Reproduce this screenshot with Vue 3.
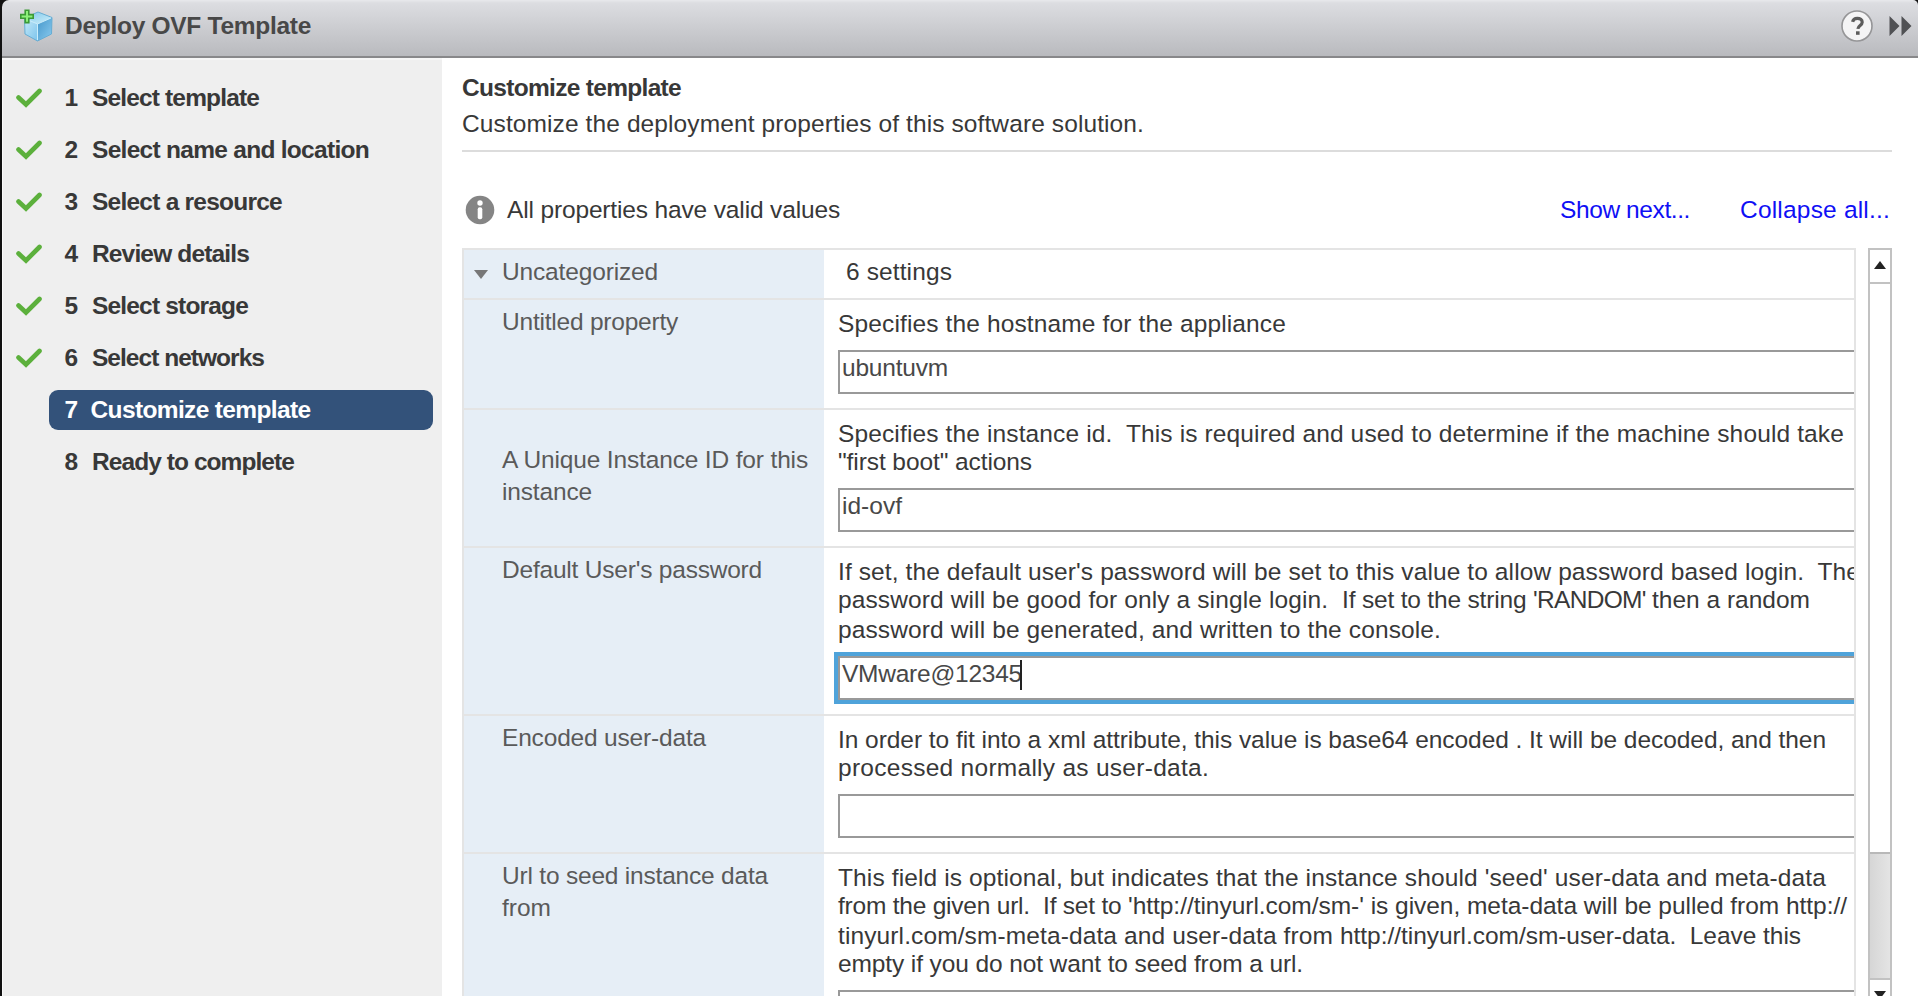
<script setup>
const steps = [
  { label: 'Select template', w: 167, done: true },
  { label: 'Select name and location', w: 277, done: true },
  { label: 'Select a resource', w: 190, done: true },
  { label: 'Review details', w: 157, done: true },
  { label: 'Select storage', w: 156, done: true },
  { label: 'Select networks', w: 172, done: true },
  { label: 'Customize template', w: 220, active: true },
  { label: 'Ready to complete', w: 202 },
]

// Every text line is a list of [text, advance width] segments.
const rows = [
  {
    kind: 'one',
    label: [[['Untitled property', 176]]],
    text: [[['Specifies the hostname for the appliance', 448]]],
    value: 'ubuntuvm', vw: 106,
  },
  {
    kind: 'two centered',
    label: [[['A Unique Instance ID for this', 306]], [['instance', 90]]],
    text: [
      [['Specifies the instance id.  This is required and used to determine if the machine should take', 1006]],
      [['"first boot" actions', 194]],
    ],
    value: 'id-ovf', vw: 60,
  },
  {
    kind: 'three',
    label: [[["Default User's password", 260]]],
    text: [
      [["If set, the default user's password will be set to this value to allow password based login.  The", 1022]],
      [
        ['password will be good for only a single login.  ', 504],
        ['If set to the string ', 191],
        ["'RANDOM' ", 119],
        ['then a random', 158],
      ],
      [['password will be generated, and written to the console.', 603]],
    ],
    value: 'VMware@12345', vw: 180, focused: true,
  },
  {
    kind: 'two',
    label: [[['Encoded user-data', 204]]],
    text: [
      [['In order to fit into a xml attribute, this value is base64 encoded . It will be decoded, and then', 988]],
      [['processed normally as user-data.', 371]],
    ],
    value: '', vw: 0,
  },
  {
    kind: 'four',
    label: [[['Url to seed instance data', 266]], [['from', 49]]],
    text: [
      [["This field is optional, but indicates that the instance should 'seed' user-data and meta-data", 988]],
      [
        ['from the given url.  If set to ', 290],
        ["'http://tinyurl.com/sm-' is given, meta-data will be pulled from http://", 719],
      ],
      [
        ['tinyurl.com/sm-meta-data and user-data from ', 502],
        ['http://tinyurl.com/sm-user-data.  Leave this', 461],
      ],
      [['empty if you do not want to seed from a url.', 465]],
    ],
    value: '', vw: 0,
  },
]

// Tracks a run of text so that it fills the given advance width.
const vFit = {
  mounted(el, { value }) {
    if (!value) return
    const natural = el.getBoundingClientRect().width
    el.style.letterSpacing = `${(value - natural) / el.textContent.length}px`
  },
}
</script>

<template>
  <div class="window">
    <header class="titlebar">
      <svg class="cube" viewBox="0 0 34 34" width="34" height="34">
        <defs>
          <linearGradient id="top" x1="0" y1="0" x2="1" y2="1">
            <stop offset="0" stop-color="#7cc6ea" /><stop offset="1" stop-color="#d0f0fb" />
          </linearGradient>
          <linearGradient id="left" x1="0" y1="0" x2="1" y2="1">
            <stop offset="0" stop-color="#c5e9f8" /><stop offset="1" stop-color="#7cc4ec" />
          </linearGradient>
          <linearGradient id="right" x1="0" y1="0" x2="1" y2="1">
            <stop offset="0" stop-color="#4597cb" /><stop offset="1" stop-color="#8acbef" />
          </linearGradient>
        </defs>
        <path d="M4.500 9L18 3L32 8.500L17.500 15Z" fill="url(#top)" />
        <path d="M4.500 9L17.500 15V32L5 25Z" fill="url(#left)" />
        <path d="M17.500 15L32 8.500L31.500 25L17.500 32Z" fill="url(#right)" />
        <path d="M4.500 9L18 3L32 8.500L31.500 25L17.500 32L5 25Z" fill="none" stroke="#66add4" stroke-width="1" />
        <path d="M6 10L17.500 15L31 9M17.500 15V31" fill="none" stroke="#c9edfb" stroke-width="1" />
        <path d="M5.200 1.200h3.600v4.400h4.400v3.600h-4.400v4.400h-3.600v-4.400h-4.400v-3.600h4.400z" fill="#8df07a" stroke="#3c9a36" stroke-width="1.600" />
      </svg>
      <span v-fit="246" class="title">Deploy OVF Template</span>
      <svg class="help" viewBox="0 0 34 34" width="34" height="34">
        <circle cx="17" cy="17" r="15" fill="#f4f4f5" stroke="#959597" stroke-width="1.600" />
        <path d="M12.600 12.800c.5-2.400 2.300-3.500 4.700-3.500 2.800 0 4.900 1.500 4.900 3.900 0 3.200-4.100 3.300-4.300 6.700" fill="none" stroke="#5c5c5c" stroke-width="3.200" />
        <rect x="16" y="22.300" width="3.600" height="3.500" fill="#5c5c5c" />
      </svg>
      <svg class="forward" viewBox="0 0 23 22" width="23" height="22">
        <path d="M0.500 1L10.500 11L0.500 21ZM12.500 1L22.500 11L12.500 21Z" fill="#505154" />
      </svg>
    </header>

    <div class="body">
      <nav class="steps">
        <div v-for="(s, i) in steps" :key="i" class="step">
          <span class="mark">
            <svg v-if="s.done" viewBox="0 0 26 20" width="26" height="20">
              <path d="M2.500 9.500L10 16.500L23.500 3" fill="none" stroke="#5cb03c" stroke-width="4.600" stroke-linecap="round" stroke-linejoin="miter" />
            </svg>
          </span>
          <span class="pill" :class="{ active: s.active }">
            <span class="num">{{ i + 1 }}</span>
            <span v-fit="s.w" class="name">{{ s.label }}</span>
          </span>
        </div>
      </nav>

      <main class="content">
        <div class="intro">
          <div><span v-fit="219" class="heading">Customize template</span></div>
          <div><span v-fit="682" class="sub">Customize the deployment properties of this software solution.</span></div>
        </div>

        <div class="status">
          <svg class="info" viewBox="0 0 30 30" width="30" height="30">
            <circle cx="15" cy="15" r="14.300" fill="#858585" />
            <circle cx="15" cy="8" r="2.700" fill="#fff" />
            <rect x="12.700" y="12.300" width="4.600" height="12" rx="2" fill="#fff" />
          </svg>
          <span v-fit="333" class="message">All properties have valid values</span>
          <a v-fit="130" class="link">Show next...</a>
          <a v-fit="150" class="link last">Collapse all...</a>
        </div>

        <div class="panel">
          <div class="table">
            <div class="row group">
              <div class="label">
                <svg class="twisty" viewBox="0 0 14 9" width="14" height="9"><path d="M0 0H14L7 9Z" fill="#777" /></svg>
                <span v-fit="156" class="line">Uncategorized</span>
              </div>
              <div class="cell"><span v-fit="106" class="line">6 settings</span></div>
            </div>
            <div v-for="(r, i) in rows" :key="i" class="row" :class="r.kind">
              <div class="label">
                <div v-for="(l, j) in r.label" :key="j" class="label-line">
                  <span v-for="(s, k) in l" :key="k" v-fit="s[1]">{{ s[0] }}</span>
                </div>
              </div>
              <div class="cell">
                <div v-for="(l, j) in r.text" :key="j" class="desc-line">
                  <span v-for="(s, k) in l" :key="k" v-fit="s[1]">{{ s[0] }}</span>
                </div>
                <div class="field" :class="{ focused: r.focused }">
                  <span v-fit="r.vw" class="line">{{ r.value }}</span><i v-if="r.focused" class="caret"></i>
                </div>
              </div>
            </div>
          </div>
          <div class="scrollbar">
            <div class="arrow"><svg viewBox="0 0 12 8" width="12" height="8"><path d="M6 0L12 8H0Z" fill="#222" /></svg></div>
            <div class="thumb"></div>
            <div class="track"></div>
            <div class="arrow down"><svg viewBox="0 0 12 8" width="12" height="8"><path d="M0 0H12L6 8Z" fill="#222" /></svg></div>
          </div>
        </div>
      </main>
    </div>
  </div>
</template>

<style>
body {
  overflow: hidden;
  background: #111;
}
</style>

<style scoped>
.window {
  box-sizing: border-box;
  width: 1918px;
  height: 996px;
  padding-left: 2px;
  overflow: hidden;
  display: flex;
  flex-direction: column;
  background: #111;
  color: #383838;
  font: 24.5px/28px "Liberation Sans", Arial, sans-serif;
}
.window span,
.window a {
  white-space: pre;
}
.titlebar {
  box-sizing: border-box;
  flex: none;
  height: 58px;
  display: flex;
  align-items: center;
  padding: 0 6px 4px 18px;
  border-bottom: 2px solid #88888a;
  border-radius: 7px 5px 0 0;
  background: linear-gradient(#e8e9ec 0, #dcdde1 3px, #b9babe 100%);
}
.cube {
  margin: 0 11px 0 0;
}
.title {
  color: #484848;
  font-weight: bold;
}
.help {
  margin-left: auto;
}
.forward {
  margin: 0 0 0 15px;
}
.body {
  flex: 1;
  min-height: 0;
  display: flex;
  background: #fff;
}
.steps {
  box-sizing: border-box;
  flex: none;
  width: 440px;
  padding-top: 12px;
  border-left: 1px solid #fafafa;
  border-top: 2px solid #f6f6f6;
  background: #efefef;
  color: #383838;
  font-weight: bold;
}
.step {
  display: flex;
  align-items: center;
  height: 52px;
}
.mark {
  width: 33px;
  padding-left: 12.5px;
  height: 20px;
  line-height: 0;
}
.pill {
  box-sizing: border-box;
  display: flex;
  width: 384px;
  height: 40px;
  padding: 6px 0 0 16px;
  border-radius: 9px;
}
.pill.active {
  background: #33527a;
  color: #fff;
}
.num {
  width: 27.5px;
}
.active .num {
  width: 26px;
}
.content {
  flex: 1;
  min-width: 0;
  display: flex;
  flex-direction: column;
  padding: 0 26px 0 20px;
}
.intro {
  flex: none;
  box-sizing: border-box;
  height: 94px;
  padding-top: 16px;
  border-bottom: 2px solid #dcdcdc;
}
.intro > div {
  height: 36px;
}
.heading {
  font-weight: bold;
}
.status {
  flex: none;
  height: 96px;
  box-sizing: border-box;
  display: flex;
  align-items: center;
  padding: 19px 2px 0 2.5px;
}
.message {
  margin-left: 12.5px;
}
.link {
  margin-left: auto;
  color: #0f0ff5;
}
.link.last {
  margin-left: 50px;
}
.panel {
  flex: 1;
  min-height: 0;
  display: flex;
  justify-content: space-between;
}
.table {
  box-sizing: border-box;
  width: 1394px;
  overflow: hidden;
  border: 2px solid #e4e4e4;
  border-bottom: 0;
}
.row {
  box-sizing: border-box;
  display: grid;
  grid-template-columns: 360px 1030px;
  border-bottom: 2px solid #e4e4e4;
}
.label {
  padding: 8px 0 0 38px;
  background: #e6eef6;
  color: #5a5a5a;
}
.cell {
  padding: 10px 0 0 14px;
  min-width: 0;
}
.group { height: 50px; }
.group .label {
  display: flex;
  align-items: flex-start;
  padding-left: 10px;
}
.group .cell { padding: 8px 0 0 22px; }
.twisty { margin: 12px 14px 0 0; }
.one { height: 110px; }
.two { height: 138px; }
.three { height: 168px; }
.four { height: 210px; }
.centered .label { padding-top: 36px; }
.label-line {
  display: flex;
  height: 32px;
}
.desc-line {
  display: flex;
  height: 28px;
}
.desc-line:nth-child(3) {
  margin-top: 2px;
}
.field {
  box-sizing: border-box;
  width: 1100px;
  height: 44px;
  margin: 12px 0 0;
  padding: 2px 0 0 2px;
  display: flex;
  border: 2px solid #999;
  background: #fff;
  color: #484848;
}
.focused {
  box-shadow: 0 0 0 4px #4fa3da;
}
.caret {
  width: 2px;
  height: 30px;
  margin-left: -2px;
  background: #222;
}
.scrollbar {
  box-sizing: border-box;
  width: 24px;
  display: flex;
  flex-direction: column;
  border: 2px solid #c2c2c2;
  border-bottom: 0;
}
.arrow {
  box-sizing: border-box;
  flex: none;
  height: 34px;
  padding: 11px 0 0 4px;
  border-bottom: 2px solid #c2c2c2;
  line-height: 0;
}
.thumb {
  flex: none;
  height: 568px;
  border-bottom: 2px solid #b8b8b8;
}
.track {
  flex: none;
  height: 124px;
  background: linear-gradient(90deg, #d6d6d6, #e4e4e4);
  border-bottom: 2px solid #c2c2c2;
}
.arrow.down {
  height: 40px;
}
</style>
